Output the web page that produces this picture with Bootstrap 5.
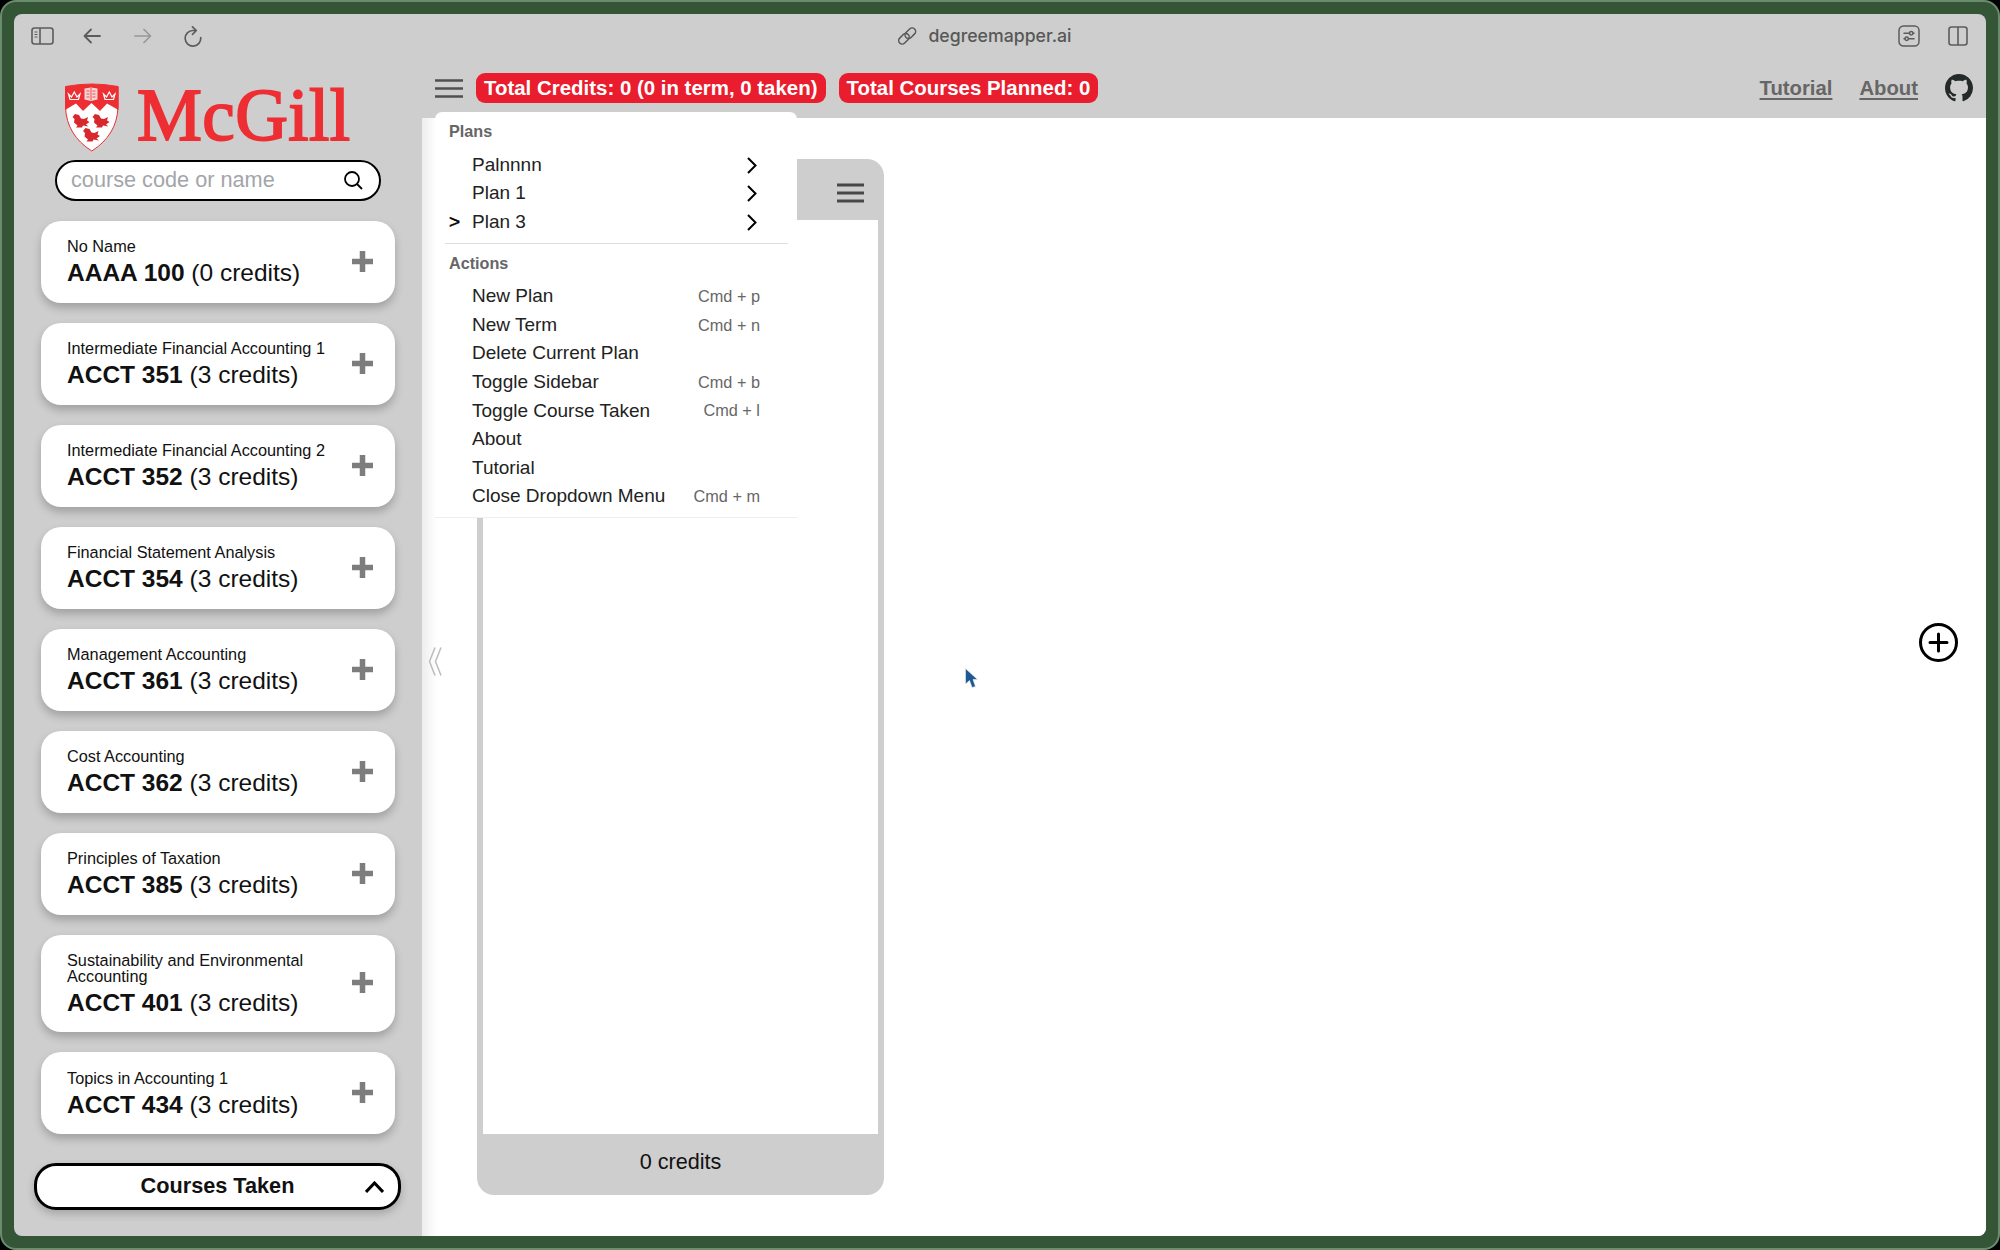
<!DOCTYPE html>
<html lang="en">
<head>
<meta charset="utf-8">
<title>degreemapper.ai</title>
<link href="https://cdn.jsdelivr.net/npm/bootstrap@5.3.0/dist/css/bootstrap.min.css" rel="stylesheet">
<style>
html{height:100%;background:#000}
body{height:1250px;width:2000px;overflow:hidden;background:#000;color:#111;font-family:"Liberation Sans",Arial,sans-serif;font-size:19px;line-height:1.2}
svg{display:block;flex:none}
.desk{height:1250px;background:#345536;border:2px solid #6b8c6e;border-radius:16px;padding:12px}
.win{height:1222px;background:#cecece;border-radius:8px;overflow:hidden}
.chrome{height:44px;padding:0 17px 0 17px;color:#5c5c5c}
.chrome-side{width:860px}
.nav-back{margin-left:29px}
.nav-fwd{margin-left:33px}
.nav-reload{margin-left:32px}
.split{margin-left:28px;margin-right:1px}
.addr{font-family:Inter,"Liberation Sans",sans-serif;font-weight:500;font-size:17.7px;color:#585858;gap:11px;margin-right:30px}
.page-row{min-height:0}
.side{width:408px;padding:25px 21px 26px 20px}
.logo{margin:0 0 0 30px;overflow:visible}
.find{width:326px;height:41px;margin:8px 0 0 21px;border:2.5px solid #000;border-radius:21px;background:#fff;padding:0 16px 1px 14px;font-size:21.7px;color:#a3a5aa}
.courses{margin:19.5px 0 .5px 7px;width:354px;gap:20px;height:930px;flex:none}
.course{border:0;border-radius:20px;background:#fff;padding:16px 20px 17px 26px;box-shadow:0 5px 9px rgba(0,0,0,.22);min-height:82px;color:#111}
.cname{font-size:16.3px;line-height:16.4px;margin-bottom:7px;padding-top:1px}
.ccode{font-size:24.5px;line-height:25px;margin-top:-1px}
.taken{height:47px;width:367px;border:3px solid #000;border-radius:22px;background:#fff;font-size:21.7px;font-weight:700;padding:0 14px 0 48px;box-shadow:0 4px 8px rgba(0,0,0,.2);margin-top:12px}
.taken svg{margin-left:15px}
.topbar{height:60px;padding:0 13px 0 13px}
.pill{background:#e91d2d;border-radius:9px;height:30px;padding:0 8px;font-size:20.45px;font-weight:700;line-height:30px;color:#fff;margin-left:13px}
.toplink{font-size:20.3px;font-weight:700;color:#666;text-decoration:underline;text-underline-offset:3px;text-decoration-thickness:2px}
.canvas{background:linear-gradient(90deg,#ededed 0,#fdfdfd 13px,#fff 16px);padding:41px 28px 41px 6px}
.collapse-col{width:14px;padding-bottom:31px}
.term{width:407px;height:1036px;margin-left:35px;border-radius:17px;background:#cecece}
.term-head{height:61px;padding:6.5px 20px 0}
.term-body{margin:0 6px;background:#fff}
.term-foot{height:61px;font-size:21.6px;padding-bottom:6px}
.add-col{padding-bottom:69px}
.planmenu{left:435px;top:112px;width:362px;height:406px;background:#fff;border-radius:7px 7px 0 0;border-bottom:1px solid #eee;z-index:5}
.mhead{font-size:16.2px;font-weight:700;color:#666;padding-left:14px;line-height:20px;margin-bottom:9px}
.mhead-top{padding-top:9px}
.mitem{height:28.57px;padding:1.500px 37px 0 37px;font-size:19px;color:#222}
.mitem svg{margin-right:3px}
.mkey{font-size:16.3px;color:#666}
.curmark{width:23px;margin-left:-23px;color:#000;-webkit-text-stroke:.5px #000}
.mrule{height:1px;background:#dedede;margin:7px 9px 9px 10px}
.pointer-arrow{left:964px;top:667px;z-index:6}
</style>
<script src="https://cdn.jsdelivr.net/npm/bootstrap@5.3.0/dist/js/bootstrap.bundle.min.js"></script>
</head>
<body>
<div class="desk">
<div class="win d-flex flex-column">
  <div class="chrome d-flex align-items-center justify-content-between">
    <div class="chrome-side d-flex align-items-center">
      <svg width="23" height="18" viewBox="0 0 23 18" fill="none" stroke="currentColor" stroke-width="1.6"><rect x="1" y="1" width="21" height="16" rx="2.5"/><path d="M9 1v16"/><path d="M3.500 5h3M3.500 7.500h3M3.500 10h3" stroke-width="1.200"/></svg>
      <svg class="nav-back" width="18" height="16" viewBox="0 0 18 16" fill="none" stroke="currentColor" stroke-width="1.8" stroke-linecap="round" stroke-linejoin="round"><path d="M17 8H1.5M8 1.5 1.5 8 8 14.500"/></svg>
      <svg class="nav-fwd" width="18" height="16" viewBox="0 0 18 16" fill="none" stroke="#989898" stroke-width="1.7" stroke-linecap="round" stroke-linejoin="round"><path d="M1 8h15.500M10 1.500 16.500 8 10 14.500"/></svg>
      <svg class="nav-reload" width="18" height="21" viewBox="0 0 18 21" fill="none" stroke="currentColor" stroke-width="1.700" stroke-linecap="round" stroke-linejoin="round"><path d="M16.700 11.500A7.800 7.800 0 1 1 9 4.500H12M8.500 .9l3.800 3.600-3.800 3.800"/></svg>
    </div>
    <div class="addr d-flex align-items-center">
      <svg width="19" height="18" viewBox="0 0 19 18" fill="none" stroke="currentColor" stroke-width="1.500"><g transform="rotate(-45 9.500 9)"><rect x="-1" y="5" width="12" height="7" rx="3.500"/><rect x="7.500" y="5.500" width="12" height="7" rx="3.500"/></g></svg>
      <span>degreemapper.ai</span>
    </div>
    <div class="chrome-side d-flex align-items-center justify-content-end">
      <svg width="22" height="22" viewBox="0 0 22 22" fill="none" stroke="currentColor" stroke-width="1.500" stroke-linecap="round"><rect x="1" y="1" width="20" height="20" rx="4.500"/><path d="M6 8.200h5.500M15 8.200h1M6 13.800h.8M10.500 13.800H16"/><circle cx="13.200" cy="8.200" r="1.700"/><circle cx="8.700" cy="13.800" r="1.700"/></svg>
      <svg class="split" width="20" height="20" viewBox="0 0 20 20" fill="none" stroke="currentColor" stroke-width="1.600"><rect x="1" y="1" width="18" height="18" rx="2.500"/><path d="M10 1v18"/></svg>
    </div>
  </div>
  <div class="page-row d-flex flex-grow-1">
    <aside class="side d-flex flex-column flex-shrink-0">
      <svg class="logo" width="290" height="69" viewBox="64 83 290 69">
        <path d="M65.500 86.500Q92 81.500 118 86.500V107Q117 135 91.800 151Q66.500 135 65.500 107Z" fill="#fff" stroke="#ed2e33" stroke-width="1"/>
        <path d="M65 86.500Q92 81.500 118.500 86.500V110L107 103.500 100 111 91.500 103 83 111 76 103.500 65 110Z" fill="#ed2e33"/>
        <path d="M84.500 88.500 91 87.500 97.500 88.500V99.500L91 101 84.500 99.500Z" fill="#f7d5d5"/><path d="M91 88v12M86.500 91h3M92.500 91h3M86.500 94h3M92.500 94h3M86.500 97h3M92.500 97h3" stroke="#ed2e33" stroke-width=".8"/>
        <g fill="none" stroke="#fff" stroke-width="1.200"><path d="M70 99.500h8.500L80 94l-3 3-2.700-5-2.800 5-3-3ZM105 99.500h8.500L115 94l-3 3-2.700-5-2.800 5-3-3Z"/></g>
        <g fill="#d9282d">
          <path id="bird" d="M72.500 117 75 114 79 115 81 118.500 84 119 88 117 87 120.500 89.500 122 86 124.500 88.500 126.500 83 125.500 82 127.500H76L77.500 125.500 74 122.500 74.500 119Z"/>
          <use href="#bird" x="20"/><use href="#bird" x="10.500" y="14"/>
        </g>
        <text x="137" y="140" font-family="Liberation Serif, serif" font-size="73" textLength="213" fill="#ed2e33" stroke="#ed2e33" stroke-width="1.900">McGill</text>
      </svg>
      <div class="find d-flex align-items-center justify-content-between">
        <span>course code or name</span>
        <svg width="19" height="19" viewBox="0 0 19 19" fill="none" stroke="#000" stroke-width="1.800"><circle cx="8" cy="8" r="7"/><path d="m13 13 5 5"/></svg>
      </div>
      <div class="courses d-flex flex-column" id="courses"></div>
      <div class="taken d-flex align-items-center flex-shrink-0">
        <span class="flex-grow-1 text-center">Courses Taken</span>
        <svg width="19" height="12" viewBox="0 0 19 12" fill="none" stroke="#000" stroke-width="3"><path d="M1 11 9.500 2 18 11"/></svg>
      </div>
    </aside>
    <div class="d-flex flex-column flex-grow-1">
      <header class="topbar d-flex align-items-center">
        <svg width="28" height="19" viewBox="0 0 28 19" stroke="#505050" stroke-width="2.600"><path d="M0 1.500h28M0 9.500h28M0 17.500h28"/></svg>
        <span class="pill">Total Credits: 0 (0 in term, 0 taken)</span>
        <span class="pill">Total Courses Planned: 0</span>
        <a class="toplink ms-auto" href="#">Tutorial</a>
        <a class="toplink" href="#" style="margin:0 27px">About</a>
        <svg width="28" height="28" viewBox="0 0 16 16" fill="#24292a"><path d="M8 0C3.580 0 0 3.580 0 8c0 3.540 2.290 6.530 5.470 7.590.4.070.55-.17.55-.38 0-.19-.01-.82-.01-1.490-2.010.37-2.530-.49-2.690-.94-.09-.23-.48-.94-.82-1.130-.28-.15-.68-.52-.01-.53.63-.01 1.080.58 1.230.82.72 1.210 1.870.87 2.330.66.07-.52.28-.87.51-1.070-1.780-.2-3.640-.89-3.640-3.950 0-.87.31-1.590.82-2.150-.08-.2-.36-1.020.08-2.120 0 0 .67-.21 2.200.82.64-.18 1.320-.27 2-.27s1.360.09 2 .27c1.530-1.040 2.200-.82 2.200-.82.44 1.100.16 1.920.08 2.120.51.56.82 1.270.82 2.150 0 3.070-1.870 3.750-3.650 3.950.29.25.54.73.54 1.480 0 1.070-.01 1.930-.01 2.200 0 .21.15.46.55.38A8.010 8.010 0 0 0 16 8c0-4.420-3.580-8-8-8z"/></svg>
      </header>
      <main class="canvas d-flex flex-grow-1">
        <div class="collapse-col d-flex align-items-center">
          <svg width="14" height="29" viewBox="0 0 14 29" fill="none" stroke="#bcbcbc" stroke-width="1.500"><path d="M7 .5 1.500 14.500 7 28.500M13 .5 7.500 14.500 13 28.500"/></svg>
        </div>
        <section class="term d-flex flex-column">
          <div class="term-head d-flex align-items-center justify-content-end">
            <svg width="27" height="20" viewBox="0 0 27 20" stroke="#484848" stroke-width="3"><path d="M0 2h27M0 10h27M0 18h27"/></svg>
          </div>
          <div class="term-body flex-grow-1"></div>
          <div class="term-foot d-flex align-items-center justify-content-center">0 credits</div>
        </section>
        <div class="add-col ms-auto d-flex align-items-center">
          <svg width="39" height="39" viewBox="0 0 39 39" fill="none" stroke="#000" stroke-width="3" stroke-linecap="round"><circle cx="19.500" cy="19.500" r="18"/><path d="M19.500 11v17M11 19.500h17"/></svg>
        </div>
      </main>
    </div>
  </div>
</div>
</div>

<nav class="planmenu position-absolute d-flex flex-column">
  <div class="mhead mhead-top">Plans</div>
  <div id="plans"></div>
  <div class="mrule"></div>
  <div class="mhead">Actions</div>
  <div id="actions"></div>
</nav>

<svg class="pointer-arrow position-absolute" width="16" height="24" viewBox="0 0 16 24"><path d="M1.500 1.500V17L5.500 13.500 8 20.500 11.500 19.500 9 12.500H13.500Z" fill="#1d5a94" stroke="#f1eeee" stroke-width=".6"/></svg>

<script>
const courses = [
  ["No Name","AAAA 100",0],
  ["Intermediate Financial Accounting 1","ACCT 351",3],
  ["Intermediate Financial Accounting 2","ACCT 352",3],
  ["Financial Statement Analysis","ACCT 354",3],
  ["Management Accounting","ACCT 361",3],
  ["Cost Accounting","ACCT 362",3],
  ["Principles of Taxation","ACCT 385",3],
  ["Sustainability and Environmental Accounting","ACCT 401",3],
  ["Topics in Accounting 1","ACCT 434",3]
];
document.getElementById("courses").innerHTML = courses.map(([n,c,k]) => `
  <div class="course d-flex align-items-center justify-content-between flex-shrink-0">
    <div class="flex-grow-1"><div class="cname">${n}</div><div class="ccode"><b>${c}</b> (${k} credits)</div></div>
    <svg width="23" height="21" viewBox="0 0 23 21" fill="none" stroke="#7d7d7d" stroke-width="5.500"><path d="M10.500 0v21M0 10.500h21"/></svg>
  </div>`).join("");
const plans = [["Palnnnn",false],["Plan 1",false],["Plan 3",true]];
document.getElementById("plans").innerHTML = plans.map(([p,cur]) => `
  <div class="mitem d-flex align-items-center">
    ${cur ? '<span class="curmark">&gt;</span>' : ''}<span class="flex-grow-1">${p}</span>
    <svg width="10" height="17" viewBox="0 0 10 17" fill="none" stroke="#000" stroke-width="2"><path d="m1 1 7.500 7.500L1 16"/></svg>
  </div>`).join("");
const actions = [["New Plan","p"],["New Term","n"],["Delete Current Plan",""],["Toggle Sidebar","b"],["Toggle Course Taken","l"],["About",""],["Tutorial",""],["Close Dropdown Menu","m"]];
document.getElementById("actions").innerHTML = actions.map(([a,k]) => `
  <div class="mitem d-flex align-items-center justify-content-between"><span>${a}</span>${k ? `<span class="mkey">Cmd + ${k}</span>` : ""}</div>`).join("");
</script>
</body>
</html>
